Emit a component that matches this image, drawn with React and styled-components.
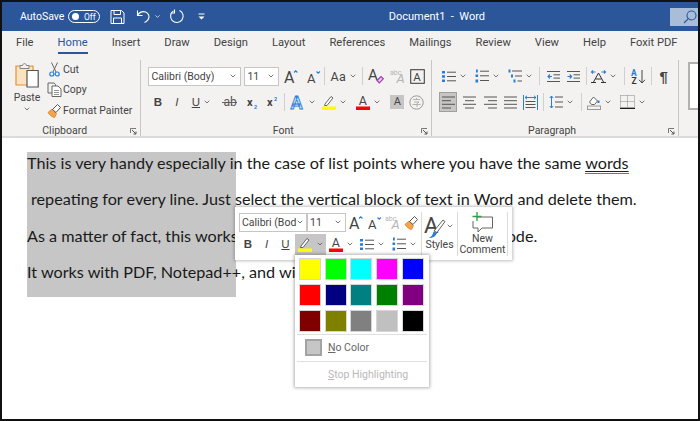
import styled, { createGlobalStyle } from "styled-components";
import { ChevronDown } from "lucide-react";

const GlobalStyle = createGlobalStyle`
  html, body { margin: 0; padding: 0; background: #fff; }
  body { font-family: Roboto, "Open Sans", sans-serif; color: #3b3a39; }
  svg { overflow: visible; }
`;

const tabs = ["File", "Home", "Insert", "Draw", "Design", "Layout", "References", "Mailings", "Review", "View", "Help", "Foxit PDF"];
const swatches = [
  "#ffff00", "#00ff00", "#00ffff", "#ff00ff", "#0000ff",
  "#ff0000", "#000080", "#008080", "#008000", "#800080",
  "#800000", "#808000", "#808080", "#c0c0c0", "#000000",
];

/* ---------- icons ---------- */
const Chev = () => <ChevronGlyph size={8} strokeWidth={2.4} />;

const SaveIcon = () => (
  <svg width="15" height="16" viewBox="0 0 15 16" fill="none" stroke="#fff" strokeWidth="1">
    <path d="M1 1.5h10.5l2.5 2.5v10.5H1z" />
    <path d="M4 1.5v4h6.5v-4M3.5 14.5V9h8v5.5" />
  </svg>
);
const UndoIcon = () => (
  <svg width="15" height="15" viewBox="0 0 15 15" fill="none" stroke="#fff" strokeWidth="1.1">
    <path d="M1.5 1.5v5h5" />
    <path d="M1.5 6.5C3 3.8 5 2.6 7.5 2.6c3 0 5.5 2.2 5.5 5 0 2.5-1.5 4.5-4.5 6" />
  </svg>
);
const RedoIcon = () => (
  <svg width="15" height="15" viewBox="0 0 15 15" fill="none" stroke="#fff" strokeWidth="1.1">
    <path d="M9.5 1.5a6.3 6.3 0 1 1-6 .4" />
    <path d="M4.5 0.5v3.5h-3" />
  </svg>
);
const QatIcon = () => (
  <svg width="7" height="7" viewBox="0 0 7 7" fill="#fff">
    <rect x="0.5" y="0.5" width="6" height="1" />
    <path d="M0.5 3.5h6l-3 3z" />
  </svg>
);
const SearchIcon = () => (
  <svg width="14" height="14" viewBox="0 0 14 14" fill="none" stroke="#2b579a" strokeWidth="1.1">
    <circle cx="8.5" cy="5.5" r="4.5" />
    <path d="M5 9l-4 4" />
  </svg>
);
const PasteIcon = () => (
  <svg width="24" height="28" viewBox="0 0 24 28" fill="none">
    <path d="M1 4h17v19H1z" fill="#fbe3c0" stroke="#e69138" strokeWidth="1.2" />
    <path d="M5 3.5h2.5C8 1 11 1 11.5 3.5H14v3H5z" fill="#f3f2f1" stroke="#777" strokeWidth="0.9" />
    <path d="M12 8.5h11.2V25H12z" fill="#fff" stroke="#555" strokeWidth="1.2" />
  </svg>
);
const CutIcon = () => (
  <svg width="11" height="15" viewBox="0 0 11 15" fill="none">
    <path d="M2.5 0.5L7 10M8.5 0.5L4 10" stroke="#666" strokeWidth="1" />
    <circle cx="2.8" cy="12" r="2" stroke="#2b7cd3" strokeWidth="1.2" />
    <circle cx="8.2" cy="12" r="2" stroke="#2b7cd3" strokeWidth="1.2" />
  </svg>
);
const CopyIcon = () => (
  <svg width="15" height="15" viewBox="0 0 15 15" fill="#f3f2f1" stroke="#666" strokeWidth="1">
    <path d="M1 1h6l1.5 1.5V11H1z" />
    <path d="M5 4h6l3 3v7.5H5z" fill="#fff" />
    <path d="M7 8.5h5M7 10.5h5M7 12.5h5" strokeWidth="0.7" />
  </svg>
);
const BrushIcon = ({ size = 15 }) => (
  <svg width={size} height={size} viewBox="0 0 15 15" fill="none">
    <path d="M1 9.5l4-3.5 4.5 4.5-2 4c-2-.2-5-2.5-6.5-5z" fill="#f2a54a" stroke="#e07b16" strokeWidth="0.8" />
    <path d="M5.5 6.5l5-5 3 3-4.500 5z" fill="#fff" stroke="#555" strokeWidth="1" />
  </svg>
);
const GrowIcon = ({ down }) => (
  <svg width="14" height="15" viewBox="0 0 14 15" fill="none">
    <text x="0" y="13.5" fontFamily="Roboto" fontSize={down ? 13 : 16} fill="#444">A</text>
    <path d={down ? "M9.5 2.5l1.7 1.7 1.7-1.7" : "M10 3.5l1.7-1.7 1.7 1.7"} stroke="#2b7cd3" strokeWidth="1.1" />
  </svg>
);
const ClearIcon = () => (
  <svg width="16" height="16" viewBox="0 0 16 16" fill="none">
    <text x="0" y="12" fontFamily="Roboto" fontSize="15" fill="#444">A</text>
    <path d="M9 12.5l4-4 2.3 2.3-4 4z" fill="#e9c8ee" stroke="#a33bb0" strokeWidth="1.2" />
  </svg>
);
const AbcIcon = () => (
  <svg width="16" height="16" viewBox="0 0 16 16" fill="none">
    <text x="0" y="6.5" fontFamily="Roboto" fontSize="7" fill="#b5b5b5">abc</text>
    <text x="6.5" y="15" fontFamily="Roboto" fontStyle="italic" fontSize="13" fill="#b5b5b5">A</text>
  </svg>
);
const BoxedAIcon = () => (
  <svg width="15" height="15" viewBox="0 0 15 15" fill="none">
    <rect x="0.7" y="0.7" width="13.6" height="13.6" stroke="#444" strokeWidth="1.1" />
    <text x="3.3" y="11.5" fontFamily="Roboto" fontSize="11.5" fill="#444">A</text>
  </svg>
);
const EffectsIcon = () => (
  <svg width="15" height="15" viewBox="0 0 15 15">
    <text x="0.5" y="14" fontFamily="Roboto" fontWeight="700" fontSize="18" fill="#bfdcf5" stroke="#2b7cd3" strokeWidth="0.8">A</text>
  </svg>
);
const PenBarIcon = () => (
  <svg width="14" height="16" viewBox="0 0 14 16" fill="none">
    <path d="M3 10l6-7.5 2 1.5-6 7.5H2.5z" fill="#fff" stroke="#555" strokeWidth="0.9" />
    <rect x="0" y="12.5" width="14" height="3.5" fill="#ffff00" />
  </svg>
);
const ColorAIcon = () => (
  <svg width="14" height="16" viewBox="0 0 14 16" fill="none">
    <text x="2.8" y="11" fontFamily="Roboto" fontSize="12.5" fill="#444">A</text>
    <rect x="0" y="12.5" width="14" height="3.5" fill="#ff0000" />
  </svg>
);
const PhoneticIcon = () => (
  <svg width="15" height="15" viewBox="0 0 15 15" fill="none">
    <circle cx="7.5" cy="7.5" r="6.7" stroke="#999" strokeWidth="1" />
    <path d="M4 4.5h7M7.5 3v1.5M5 7h5l-2 1.5v3.5M3.5 9.5h8" stroke="#aaa" strokeWidth="0.9" />
  </svg>
);
const StrikeIcon = () => (
  <svg width="15" height="12" viewBox="0 0 15 12">
    <text x="1.5" y="10" fontFamily="Roboto" fontSize="12" fill="#555">ab</text>
    <path d="M0 6.5h15" stroke="#555" strokeWidth="0.9" />
  </svg>
);
const ScriptIcon = ({ sup }) => (
  <svg width="11" height="13" viewBox="0 0 11 13">
    <text x="0" y="10" fontFamily="Roboto" fontWeight="700" fontSize="11" fill="#444">x</text>
    <text x="7" y={sup ? 5 : 12.5} fontFamily="Roboto" fontWeight="700" fontSize="5.5" fill="#2b7cd3">2</text>
  </svg>
);
const BulletsIcon = () => (
  <svg width="14" height="13" viewBox="0 0 14 13">
    <path d="M0 1h3v2.5H0zM0 5.2h3v2.5H0zM0 9.5h3V12H0z" fill="#2b7cd3" />
    <path d="M5 2.2h9M5 6.5h9M5 10.8h9" stroke="#555" strokeWidth="1" />
  </svg>
);
const NumberedIcon = () => (
  <svg width="14" height="14" viewBox="0 0 14 14">
    <path d="M1 0.5h1.8v3H1zM0.5 5.5h2.6v2.5H0.5zM0.5 10.5h2.6v3H0.5z" fill="#2b7cd3" />
    <path d="M5 2.2h9M5 6.8h9M5 11.5h9" stroke="#555" strokeWidth="1" />
  </svg>
);
const MultiIcon = () => (
  <svg width="14" height="14" viewBox="0 0 14 14">
    <path d="M0.5 0.5h2v3h-2zM3 5.5h2v3H3zM5.5 10.5h2v3h-2z" fill="#2b7cd3" />
    <path d="M4 2h10M7 7h7M9.5 12h4.5" stroke="#555" strokeWidth="1" />
  </svg>
);
const IndentIcon = ({ out }) => (
  <svg width="13" height="11" viewBox="0 0 13 11">
    <path d="M0 .5h13M6.5 3.8H13M6.5 7.1H13M0 10.5h13" stroke="#555" strokeWidth="1" />
    <path d={out ? "M5 5.5H1M3 3.5l-2 2 2 2" : "M0.5 5.5h4M2.7 3.5l2 2-2 2"} fill="none" stroke="#2b7cd3" strokeWidth="1.1" />
  </svg>
);
const AsianIcon = () => (
  <svg width="15" height="13" viewBox="0 0 15 13" fill="none">
    <path d="M2.5 12L7.5 3l5 9M4.5 9h6M0 12.5h5M10 12.5h5" stroke="#333" strokeWidth="1" />
    <path d="M0.5 2h4M2 .5L.5 2 2 3.5M14.5 2h-4M13 .5L14.5 2 13 3.5" stroke="#2b7cd3" strokeWidth="1.1" />
  </svg>
);
const SortIcon = () => (
  <svg width="15" height="15" viewBox="0 0 15 15" fill="none">
    <text x="0" y="6.5" fontFamily="Roboto" fontWeight="700" fontSize="8.5" fill="#2b7cd3">A</text>
    <text x="0.5" y="14.5" fontFamily="Roboto" fontWeight="700" fontSize="8.5" fill="#333">Z</text>
    <path d="M11 1v13M8 10.8l3 3.2 3-3.2" stroke="#444" strokeWidth="1" />
  </svg>
);
const AlignIcon = ({ kind }) => {
  const rows = {
    left: "M0 1h13M0 4.7h9M0 8.3h13M0 12h9",
    center: "M0 1h13M2 4.7h9M0 8.3h13M2 12h9",
    right: "M0 1h13M4 4.7h9M0 8.3h13M4 12h9",
    justify: "M0 1h13M0 4.7h13M0 8.3h13M0 12h13",
  };
  return (
    <svg width="13" height="13" viewBox="0 0 13 13">
      <path d={rows[kind]} stroke="#555" strokeWidth="1" />
    </svg>
  );
};
const DistributeIcon = () => (
  <svg width="15" height="15" viewBox="0 0 15 15" fill="none">
    <path d="M.5 0v15M14.5 0v15" stroke="#2b7cd3" strokeWidth="1" />
    <path d="M2 2.5h11M4 .8L2 2.5l2 1.7M11 .8l2 1.7-2 1.7" stroke="#2b7cd3" strokeWidth="1" />
    <path d="M2.5 6.5h10M2.5 9.5h10M2.5 12.5h10" stroke="#555" strokeWidth="1" />
  </svg>
);
const SpacingIcon = () => (
  <svg width="14" height="14" viewBox="0 0 14 14" fill="none">
    <path d="M2.5 1v12M.8 3l1.7-2 1.7 2M.8 11l1.7 2 1.7-2" stroke="#2b7cd3" strokeWidth="1" />
    <path d="M6 2h8M6 7h8M6 12h8" stroke="#555" strokeWidth="1" />
  </svg>
);
const ShadingIcon = () => (
  <svg width="14" height="15" viewBox="0 0 14 15" fill="none">
    <path d="M2.5 7l4-5 4 4-3 3.5h-3z" fill="#fff" stroke="#555" strokeWidth="0.9" />
    <path d="M11.5 5.5v2.5" stroke="#2b7cd3" strokeWidth="2" />
    <rect x="0.5" y="11" width="13" height="3.5" fill="#f3f2f1" stroke="#999" />
  </svg>
);
const BordersIcon = () => (
  <svg width="15" height="14" viewBox="0 0 15 14" fill="none">
    <path d="M.5.5h14M.5.5v12M14.5.5v12M7.5.5v12M.5 6.5h14" stroke="#888" strokeWidth="1" strokeDasharray="1 1" />
    <path d="M0 13.3h15" stroke="#111" strokeWidth="1.3" />
  </svg>
);
const LauncherIcon = () => (
  <svg width="7" height="7" viewBox="0 0 7 7" fill="none">
    <path d="M.5 5V.5H6" stroke="#777" />
    <path d="M2 2l4 4M6 3.5V6H3.5" stroke="#555" />
  </svg>
);
const StylesIcon = () => (
  <svg width="21" height="24" viewBox="0 0 21 24" fill="none">
    <text x="-1" y="19" fontFamily="Roboto" fontSize="22" fill="#444">A</text>
    <path d="M9 17L18 6l2 1.5-8 11z" fill="#fff" stroke="#555" strokeWidth="0.9" />
    <path d="M4 24c2-1 4-3 4.5-6.5l3.5 1.5C11 22 8 24 4 24z" fill="#2b7cd3" />
  </svg>
);
const CommentIcon = () => (
  <svg width="21" height="21" viewBox="0 0 21 21" fill="none">
    <path d="M4 5h16.500v11H10l-4 4v-4H1V9" stroke="#555" strokeWidth="0.9" />
    <path d="M5 0v9M0.5 4.5h9" stroke="#2f9e44" strokeWidth="1.3" />
  </svg>
);

/* ---------- page ---------- */
const App = () => (
  <>
    <GlobalStyle />
    <Frame>
      <TitleBar>
        <AutoSave>AutoSave</AutoSave>
        <Toggle><Knob /><span>Off</span></Toggle>
        <QatSlot $ml={10}><SaveIcon /></QatSlot>
        <QatSlot $ml={11}><UndoIcon /></QatSlot>
        <QatSlot $ml={3}><ChevronDown size={7} strokeWidth={2.4} color="#fff" /></QatSlot>
        <QatSlot $ml={9}><RedoIcon /></QatSlot>
        <QatSlot $ml={13}><QatIcon /></QatSlot>
        <DocTitle>Document1 &nbsp;-&nbsp; Word</DocTitle>
        <SearchBox><SearchIcon /></SearchBox>
      </TitleBar>

      <TabBar>
        {tabs.map((t) => (
          <Tab key={t} $active={t === "Home"}>{t}</Tab>
        ))}
      </TabBar>

      <Ribbon>
        <ClipboardGroup>
          <ClipboardBody>
            <PasteCol>
              <PasteIcon />
              <PasteLabel>Paste</PasteLabel>
              <Chev />
            </PasteCol>
            <ClipList>
              <ClipItem><ClipIcon><CutIcon /></ClipIcon>Cut</ClipItem>
              <ClipItem><ClipIcon><CopyIcon /></ClipIcon>Copy</ClipItem>
              <ClipItem><ClipIcon><BrushIcon /></ClipIcon>Format Painter</ClipItem>
            </ClipList>
          </ClipboardBody>
          <GroupLabel>Clipboard<Launcher><LauncherIcon /></Launcher></GroupLabel>
        </ClipboardGroup>

        <FontGroup>
          <ToolRows>
            <ToolRow>
              <Combo $w={93}>Calibri (Body)<Chev /></Combo>
              <Combo $w={35} $ml={3}>11<Chev /></Combo>
              <Tool $w={24}><GrowIcon /></Tool>
              <Tool $w={21}><GrowIcon down /></Tool>
              <Sep />
              <Tool $w={37}><CaseText>Aa</CaseText><Chev /></Tool>
              <Sep />
              <Tool $w={26}><ClearIcon /></Tool>
              <Tool $w={18}><AbcIcon /></Tool>
              <Tool $w={20}><BoxedAIcon /></Tool>
            </ToolRow>
            <ToolRow>
              <Tool $w={19}><Letter $bold>B</Letter></Tool>
              <Tool $w={19}><Letter $italic>I</Letter></Tool>
              <Tool $w={30}><Letter $under>U</Letter><Chev /></Tool>
              <Tool $w={26}><StrikeIcon /></Tool>
              <Tool $w={20}><ScriptIcon /></Tool>
              <Tool $w={21}><ScriptIcon sup /></Tool>
              <Sep $ml={1} />
              <Tool $w={36}><EffectsIcon /><Chev /></Tool>
              <Tool $w={27}><PenBarIcon /><Chev /></Tool>
              <Tool $w={40}><ColorAIcon /><Chev /></Tool>
              <Tool $w={18}><ShadedA>A</ShadedA></Tool>
              <Tool $w={20}><PhoneticIcon /></Tool>
            </ToolRow>
          </ToolRows>
          <GroupLabel>Font<Launcher><LauncherIcon /></Launcher></GroupLabel>
        </FontGroup>

        <ParagraphGroup>
          <ToolRows>
            <ToolRow>
              <Tool $w={30}><BulletsIcon /><Chev /></Tool>
              <Tool $w={36}><NumberedIcon /><Chev /></Tool>
              <Tool $w={30}><MultiIcon /><Chev /></Tool>
              <Sep $ml={4} />
              <Tool $w={26}><IndentIcon out /></Tool>
              <Tool $w={14}><IndentIcon /></Tool>
              <Sep $ml={6} />
              <Tool $w={34}><AsianIcon /><Chev /></Tool>
              <Sep $ml={3} />
              <Tool $w={26}><SortIcon /></Tool>
              <Sep />
              <Tool $w={23}><Pilcrow>¶</Pilcrow></Tool>
            </ToolRow>
            <ToolRow>
              <Tool $w={18} $selected><AlignIcon kind="left" /></Tool>
              <Tool $w={24}><AlignIcon kind="center" /></Tool>
              <Tool $w={18}><AlignIcon kind="right" /></Tool>
              <Tool $w={22}><AlignIcon kind="justify" /></Tool>
              <Tool $w={18}><DistributeIcon /></Tool>
              <Sep $ml={4} />
              <Tool $w={34}><SpacingIcon /><Chev /></Tool>
              <Sep $ml={3} />
              <Tool $w={34}><ShadingIcon /><Chev /></Tool>
              <Tool $w={34}><BordersIcon /><Chev /></Tool>
            </ToolRow>
          </ToolRows>
          <GroupLabel>Paragraph<Launcher><LauncherIcon /></Launcher></GroupLabel>
        </ParagraphGroup>

        <StylesGallery />
      </Ribbon>

      <Page>
        <SelectionBlock />
        <Line>This is very handy especially in the case of list points where you have the same <Squiggle>words</Squiggle></Line>
        <Line $indent={4}>repeating for every line. Just select the vertical block of text in Word and delete them.</Line>
        <Line>As a matter of fact, this works in Excel and Outlook in the column mode.</Line>
        <Line>It works with PDF, Notepad++, and with others.</Line>

        <MiniToolbar>
          <MiniTools>
            <ToolRow>
              <Combo $w={68}>Calibri (Bod<Chev /></Combo>
              <Combo $w={39}>11<Chev /></Combo>
              <Tool $w={20}><GrowIcon /></Tool>
              <Tool $w={17}><GrowIcon down /></Tool>
              <Tool $w={19}><AbcIcon /></Tool>
              <Tool $w={19}><BrushIcon /></Tool>
            </ToolRow>
            <ToolRow>
              <Tool $w={18}><Letter $bold>B</Letter></Tool>
              <Tool $w={19}><Letter $italic>I</Letter></Tool>
              <Tool $w={19}><Letter $under>U</Letter></Tool>
              <HighlightTool><PenBarIcon /><Chev /></HighlightTool>
              <Tool $w={30}><ColorAIcon /><Chev /></Tool>
              <Tool $w={32}><BulletsIcon /><Chev /></Tool>
              <Tool $w={32}><NumberedIcon /><Chev /></Tool>
            </ToolRow>
          </MiniTools>
          <MiniSep />
          <BigTool $w={35}>
            <StylesHead><StylesIcon /><Chev /></StylesHead>
            <span>Styles</span>
          </BigTool>
          <MiniSep />
          <BigTool $w={49}>
            <CommentIcon />
            <span>New<br />Comment</span>
          </BigTool>
          <MiniSep />
        </MiniToolbar>

        <ColorMenu>
          <SwatchGrid>
            {swatches.map((c) => (
              <Swatch key={c} $color={c} />
            ))}
          </SwatchGrid>
          <MenuDivider />
          <MenuRow>
            <NoColorBox />
            <span><u>N</u>o Color</span>
          </MenuRow>
          <MenuDivider />
          <DisabledRow><u>S</u>top Highlighting</DisabledRow>
        </ColorMenu>
      </Page>
    </Frame>
  </>
);

const Frame = styled.div`
  width: 700px;
  height: 421px;
  box-sizing: border-box;
  border: 2px solid #111;
  overflow: hidden;
  display: flex;
  flex-direction: column;
  background: #fff;
`;

const ChevronGlyph = styled(ChevronDown)`
  color: #555;
  flex: none;
`;

const TitleBar = styled.div`
  height: 29px;
  flex: none;
  background: #2b579a;
  color: #fff;
  display: flex;
  align-items: center;
  padding-left: 18px;
  font-size: 11px;
`;
const AutoSave = styled.span`
  width: 48px;
  font-size: 10.5px;
`;
const Toggle = styled.div`
  width: 32px;
  height: 13px;
  box-sizing: border-box;
  border: 1px solid #fff;
  border-radius: 7px;
  display: flex;
  align-items: center;
  padding-left: 3px;
  gap: 5px;
  font-size: 8.5px;
`;
const Knob = styled.i`
  width: 7px;
  height: 7px;
  border-radius: 50%;
  background: #fff;
`;
const QatSlot = styled.span`
  display: flex;
  margin-left: ${(p) => p.$ml}px;
`;
const DocTitle = styled.span`
  margin-left: auto;
  margin-right: 185px;
`;
const SearchBox = styled.div`
  width: 28px;
  height: 18px;
  background: #a9bdd9;
  display: flex;
  align-items: center;
  padding-left: 13px;
  box-sizing: border-box;
  margin-top: 1px;
`;

const TabBar = styled.div`
  height: 29px;
  flex: none;
  background: #f3f2f1;
  display: flex;
  gap: 24px;
  padding-left: 14px;
  font-size: 11.2px;
  align-items: flex-start;
  white-space: nowrap;
`;
const Tab = styled.div`
  height: 23px;
  padding-top: 4px;
  box-sizing: border-box;
  line-height: 16px;
  color: ${(p) => (p.$active ? "#2b579a" : "#444")};
  border-bottom: ${(p) => (p.$active ? "2px solid #2b579a" : "2px solid transparent")};
`;

const Ribbon = styled.div`
  height: 78px;
  flex: none;
  box-sizing: border-box;
  background: #f3f2f1;
  border-bottom: 2px solid #dcdbda;
  display: flex;
  font-size: 10.5px;
  color: #444;
`;
const Group = styled.div`
  display: flex;
  flex-direction: column;
  box-sizing: border-box;
  border-right: 1px solid #c8c6c4;
`;
const ClipboardGroup = styled(Group)`
  width: 140px;
`;
const ClipboardBody = styled.div`
  flex: 1;
  display: flex;
  padding-left: 12px;
`;
const PasteCol = styled.div`
  width: 26px;
  display: flex;
  flex-direction: column;
  align-items: center;
  padding-top: 2px;
`;
const PasteLabel = styled.span`
  line-height: 14px;
  margin-top: 1px;
`;
const ClipList = styled.div`
  display: flex;
  flex-direction: column;
  padding-left: 7px;
  margin-top: -1px;
`;
const ClipItem = styled.div`
  height: 20.5px;
  display: flex;
  align-items: center;
  white-space: nowrap;
`;
const ClipIcon = styled.span`
  width: 14px;
  display: flex;
  justify-content: center;
  margin-right: 2px;
`;
const GroupLabel = styled.div`
  position: relative;
  height: 12px;
  line-height: 14px;
  text-align: center;
  padding-right: 13px;
`;
const Launcher = styled.span`
  position: absolute;
  right: 3px;
  bottom: 1px;
  display: flex;
`;
const FontGroup = styled(Group)`
  width: 292px;
  padding-left: 7px;
`;
const ParagraphGroup = styled(Group)`
  width: 248px;
  padding-left: 7px;
`;
const ToolRows = styled.div`
  flex: 1;
  display: flex;
  flex-direction: column;
  gap: 6px;
  padding-top: 6px;
`;
const ToolRow = styled.div`
  height: 20px;
  display: flex;
  align-items: center;
`;
const Tool = styled.div`
  width: ${(p) => p.$w}px;
  height: 20px;
  flex: none;
  box-sizing: border-box;
  display: flex;
  align-items: center;
  justify-content: center;
  gap: 3px;
  background: ${(p) => (p.$selected ? "#c8c6c4" : "transparent")};
  border: ${(p) => (p.$selected ? "1px solid #a19f9d" : "none")};
`;
const Combo = styled.div`
  width: ${(p) => p.$w}px;
  height: 19px;
  flex: none;
  margin-left: ${(p) => p.$ml || 0}px;
  box-sizing: border-box;
  border: 1px solid #c8c6c4;
  background: #fff;
  display: flex;
  align-items: center;
  justify-content: space-between;
  padding: 0 3px 0 2px;
  font-size: 10.5px;
  white-space: nowrap;
`;
const Sep = styled.i`
  width: 1px;
  height: 18px;
  flex: none;
  background: #d2d0ce;
  margin-left: ${(p) => p.$ml || 0}px;
`;
const Letter = styled.span`
  font-family: "Liberation Sans", sans-serif;
  font-size: 11.5px;
  font-weight: ${(p) => (p.$bold ? 700 : 400)};
  font-style: ${(p) => (p.$italic ? "italic" : "normal")};
  text-decoration: ${(p) => (p.$under ? "underline" : "none")};
  color: #444;
`;
const CaseText = styled.span`
  font-size: 12.5px;
  letter-spacing: 0.5px;
`;
const ShadedA = styled.span`
  width: 14px;
  height: 14px;
  background: #c8c6c4;
  text-align: center;
  line-height: 14px;
  font-size: 11px;
`;
const Pilcrow = styled.span`
  font-family: "Liberation Sans", sans-serif;
  font-weight: 700;
  font-size: 15px;
  color: #444;
`;
const StylesGallery = styled.div`
  width: 10px;
  height: 48px;
  margin: 2px 0 0 9px;
  box-sizing: border-box;
  border: 2px solid #b3b0ad;
  border-right: none;
  background: #fff;
`;

const Page = styled.div`
  position: relative;
  flex: 1;
  background: #fff;
  padding: 13px 0 0 25px;
  font-family: Lato, "Liberation Sans", sans-serif;
  font-size: 16.2px;
  color: #1a1a1a;
`;
const SelectionBlock = styled.div`
  position: absolute;
  left: 25px;
  top: 14px;
  width: 209px;
  height: 145px;
  background: #c6c6c6;
`;
const Line = styled.div`
  position: relative;
  height: 36.4px;
  line-height: 24px;
  white-space: nowrap;
  padding-left: ${(p) => p.$indent || 0}px;
`;
const Squiggle = styled.span`
  text-decoration: underline #222 1px;
  text-underline-offset: 2px;
  border-bottom: 1px solid #3b7fd6;
  padding-bottom: 1px;
`;

const MiniToolbar = styled.div`
  position: absolute;
  left: 233px;
  top: 69px;
  width: 277px;
  height: 53px;
  box-sizing: border-box;
  background: #fff;
  box-shadow: 0 0 3px 1px rgba(0, 0, 0, 0.25);
  display: flex;
  padding: 5px 0 0 4px;
  font-family: Roboto, sans-serif;
  font-size: 10.5px;
  color: #444;
`;
const MiniTools = styled.div`
  width: 182px;
  display: flex;
  flex-direction: column;
  gap: 2px;
`;
const HighlightTool = styled.div`
  width: 31px;
  height: 21px;
  flex: none;
  background: #c6c6c6;
  display: flex;
  align-items: center;
  justify-content: center;
  gap: 4px;
`;
const MiniSep = styled.i`
  width: 1px;
  height: 44px;
  background: #dcdbda;
  flex: none;
`;
const BigTool = styled.div`
  width: ${(p) => p.$w}px;
  flex: none;
  display: flex;
  flex-direction: column;
  align-items: center;
  text-align: center;
  line-height: 11px;
  font-size: 10.5px;
`;
const StylesHead = styled.div`
  display: flex;
  align-items: center;
  height: 27px;
`;

const ColorMenu = styled.div`
  position: absolute;
  left: 293px;
  top: 117px;
  width: 134px;
  height: 132px;
  box-sizing: border-box;
  background: #fff;
  box-shadow: 0 0 3px 1px rgba(0, 0, 0, 0.3);
  padding: 3px 2px 0;
  font-family: Roboto, sans-serif;
  font-size: 10.5px;
  color: #666;
`;
const SwatchGrid = styled.div`
  display: grid;
  grid-template-columns: repeat(5, 22px);
  gap: 4px 3.7px;
  padding-left: 2px;
`;
const Swatch = styled.div`
  height: 22px;
  box-sizing: border-box;
  background: ${(p) => p.$color};
  border: 1px solid #d6d6d6;
`;
const MenuDivider = styled.div`
  height: 1px;
  background: #e1dfdd;
  margin-top: 2px;
`;
const MenuRow = styled.div`
  height: 24px;
  display: flex;
  align-items: center;
  padding-left: 8px;
  gap: 6px;
`;
const NoColorBox = styled.div`
  width: 17px;
  height: 17px;
  box-sizing: border-box;
  background: #c6c6c6;
  border: 2px solid #a3a3a3;
`;
const DisabledRow = styled.div`
  height: 25px;
  line-height: 25px;
  padding-left: 31px;
  color: #b8b8b8;
`;

export default App;
